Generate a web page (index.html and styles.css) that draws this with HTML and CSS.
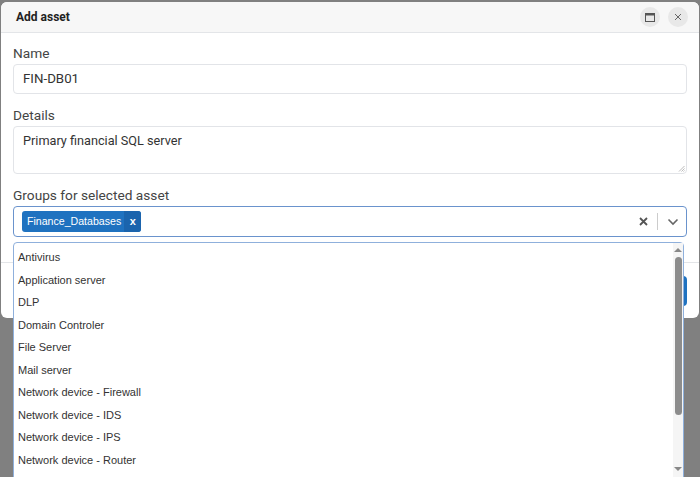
FILE: index.html
```html
<!DOCTYPE html>
<html>
<head>
<meta charset="utf-8">
<link rel="stylesheet" href="styles.css">
</head>
<body>
<div class="modal">
  <div class="modal-header">
    <div class="modal-title">Add asset</div>
    <div class="header-buttons">
      <span class="hbtn">
        <svg width="10" height="9" viewBox="0 0 10 9"><rect x="0.5" y="0.5" width="9" height="8" fill="none" stroke="#555" stroke-width="1"/><rect x="0.5" y="0.5" width="9" height="2" fill="#555"/></svg>
      </span>
      <span class="hbtn">
        <svg width="8" height="8" viewBox="0 0 8 8"><path d="M1 1L7 7M7 1L1 7" stroke="#666" stroke-width="1"/></svg>
      </span>
    </div>
  </div>
  <div class="modal-body">
    <div class="field">
      <label class="lbl">Name</label>
      <div class="input">FIN-DB01</div>
    </div>
    <div class="field">
      <label class="lbl">Details</label>
      <div class="textarea">Primary financial SQL server
        <svg class="grip" width="7" height="7" viewBox="0 0 7 7"><path d="M6.5 1L1 6.5M6.5 3.5L3.5 6.5M6.5 5.5L5.5 6.5" stroke="#aaa" stroke-width="0.8"/></svg>
      </div>
    </div>
    <div class="field last">
      <label class="lbl">Groups for selected asset</label>
      <div class="select">
        <div class="tag"><span class="tag-text">Finance_Databases</span><span class="tag-x">x</span></div>
        <div class="select-tools">
          <svg class="clear" width="9" height="9" viewBox="0 0 9 9"><path d="M1 1L8 8M8 1L1 8" stroke="#555" stroke-width="1.8"/></svg>
          <span class="sep"></span>
          <svg class="chev" width="12" height="8" viewBox="0 0 12 8"><path d="M1.5 1.5L6 6L10.5 1.5" fill="none" stroke="#666" stroke-width="1.6"/></svg>
        </div>
        <div class="dropdown">
          <ul class="options">
            <li>Antivirus</li>
            <li>Application server</li>
            <li>DLP</li>
            <li>Domain Controler</li>
            <li>File Server</li>
            <li>Mail server</li>
            <li>Network device - Firewall</li>
            <li>Network device - IDS</li>
            <li>Network device - IPS</li>
            <li>Network device - Router</li>
          </ul>
          <div class="scrollbar">
            <span class="arrow-up"></span>
            <span class="thumb"></span>
            <span class="track"></span>
            <span class="arrow-down"></span>
          </div>
        </div>
      </div>
    </div>
  </div>
  <div class="modal-footer">
    <button class="btn">Save</button>
  </div>
</div>
</body>
</html>
```

FILE: styles.css
```css
html, body {
  margin: 0;
  padding: 0;
  overflow: hidden;
  height: 477px;
}
body {
  background: #808080;
  font-family: Roboto, "Liberation Sans", Arial, sans-serif;
  color: #333;
}
.modal {
  margin: 2px 1px 0 1px;
  width: 698px;
  background: #fff;
  border-radius: 6px;
}
.modal-header {
  height: 30px;
  background: #f7f7f7;
  border-bottom: 1px solid #e3e5e8;
  border-radius: 6px 6px 0 0;
  display: flex;
  align-items: center;
  justify-content: space-between;
  padding: 0 11px 0 15px;
}
.modal-title {
  font-weight: bold;
  font-size: 12px;
  color: #222;
}
.header-buttons {
  display: flex;
  gap: 8px;
}
.hbtn {
  width: 20px;
  height: 20px;
  border-radius: 50%;
  background: #e8e8e8;
  display: flex;
  align-items: center;
  justify-content: center;
}
.modal-body {
  padding: 10px 12px 25px 12px;
}
.field {
  display: flex;
  flex-direction: column;
  margin-bottom: 11px;
}
.field.last {
  margin-bottom: 0;
}
.lbl {
  font-size: 13.7px;
  line-height: 20px;
  color: #444;
  margin-bottom: 1px;
}
.input {
  height: 28px;
  border: 1px solid #e2e4e8;
  border-radius: 4px;
  padding: 0 9px;
  font-size: 13.3px;
  line-height: 28px;
  color: #333;
}
.textarea {
  position: relative;
  height: 46px;
  border: 1px solid #e2e4e8;
  border-radius: 4px;
  padding: 0 9px;
  font-size: 12.7px;
  line-height: 27px;
  color: #333;
}
.grip {
  position: absolute;
  right: 1px;
  bottom: 1px;
}
.select {
  position: relative;
  height: 29px;
  border: 1px solid #6a93cd;
  border-radius: 4px;
  display: flex;
  align-items: center;
  justify-content: space-between;
  padding: 0 7px 0 8px;
}
.tag {
  display: flex;
  height: 21px;
  background: #1f72c0;
  border-radius: 3px;
  color: #fff;
  font-family: "Liberation Sans", Arial, sans-serif;
  font-size: 10.6px;
  line-height: 21px;
  overflow: hidden;
}
.tag-text {
  padding: 0 3px 0 5px;
}
.tag-x {
  width: 17px;
  text-align: center;
  background: #1b64ad;
  font-weight: bold;
  font-size: 11px;
}
.select-tools {
  display: flex;
  align-items: center;
}
.sep {
  width: 1px;
  height: 17px;
  background: #ccc;
  margin: 0 9px 0 9px;
}
.dropdown {
  position: absolute;
  top: 35px;
  left: -1px;
  width: 669px;
  height: 234px;
  background: #fff;
  border: 1px solid #8fb0dc;
  border-radius: 4px 4px 0 0;
  display: flex;
  z-index: 5;
}
.options {
  list-style: none;
  margin: 0;
  padding: 3px 0 0 0;
  flex: 1;
  overflow: hidden;
}
.options li {
  font-family: "Liberation Sans", Arial, sans-serif;
  font-size: 11px;
  line-height: 22.5px;
  height: 22.5px;
  padding-left: 4px;
  color: #333;
}
.scrollbar {
  width: 10px;
  background: #f5f5f5;
  display: flex;
  flex-direction: column;
  align-items: center;
  padding-top: 5px;
}
.arrow-up {
  width: 0;
  height: 0;
  border-left: 4px solid transparent;
  border-right: 4px solid transparent;
  border-bottom: 4px solid #888;
}
.thumb {
  width: 7px;
  height: 158px;
  margin-top: 5px;
  background: #8c8c8c;
  border-radius: 4px;
}
.track {
  flex: 1;
}
.arrow-down {
  width: 0;
  height: 0;
  border-left: 4px solid transparent;
  border-right: 4px solid transparent;
  border-top: 4px solid #888;
  margin-bottom: 6px;
}
.modal-footer {
  border-top: 1px solid #e3e5e8;
  padding: 13px 12px 12px 12px;
  display: flex;
  justify-content: flex-end;
}
.btn {
  height: 30px;
  width: 70px;
  border: none;
  border-radius: 4px;
  background: #1f72c0;
  color: #fff;
  font-family: inherit;
  font-size: 14px;
}
```
